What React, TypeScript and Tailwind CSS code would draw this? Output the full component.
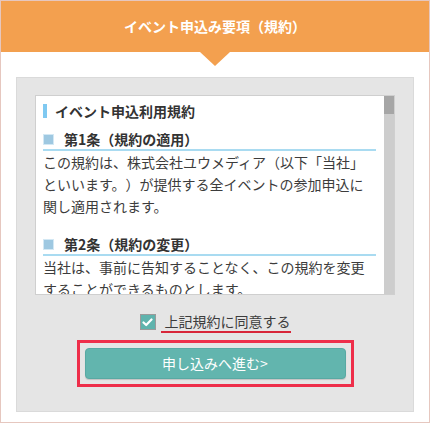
import React from 'react'

const font = { fontFamily: '"Noto Sans CJK JP", "Noto Sans", sans-serif' }

const Article = ({ title, body, first }: { title: string; body: string; first?: boolean }) => (
  <div className={first ? 'mt-2' : 'mt-[17px]'}>
    <h3 className="flex items-center gap-[10px] border-b-2 border-[#a9dbf1] text-[14px] font-bold leading-[20px] text-[#333]">
      <span className="h-[11px] w-[11px] border border-[#d3e8f4] bg-[#9ec8e1]" />
      {title}
    </h3>
    <p className="text-[14px] leading-[22px] text-[#3c3c3c]">{body}</p>
  </div>
)

export default function App() {
  return (
    <div
      style={font}
      className="h-[423px] w-[430px] border border-[#e6c7bf] bg-white [text-spacing-trim:space-all]"
    >
      <div className="flex h-[51px] items-center justify-center bg-[#f3a04f] text-[14px] font-bold text-white">
        イベント申込み要項（規約）
      </div>
      <div className="mx-auto h-0 w-0 border-x-[15px] border-t-[14px] border-x-transparent border-t-[#f3a04f]" />

      <div className="mx-[15px] mt-[11px] flex h-[335px] flex-col items-center border border-[#dadada] bg-[#e5e5e5] px-[18px] pt-[17px]">
        <div className="flex h-[200px] w-full border border-[#cfcfcf] bg-white">
          <div className="flex-1 overflow-hidden pl-[7px] pr-[8px] pt-[5px]">
            <h2 className="flex items-center gap-[8px] text-[14px] font-bold leading-[20px] text-[#333]">
              <span className="h-[14px] w-[4px] bg-[#7fc9f1]" />
              イベント申込利用規約
            </h2>
            <Article
              first
              title="第1条（規約の適用）"
              body="この規約は、株式会社ユウメディア（以下「当社」といいます。）が提供する全イベントの参加申込に関し適用されます。"
            />
            <Article
              title="第2条（規約の変更）"
              body="当社は、事前に告知することなく、この規約を変更することができるものとします。"
            />
          </div>
          <div className="w-[10px] bg-[#cdcdcd]">
            <div className="h-[18px] bg-[#a6a6a6]" />
          </div>
        </div>

        <label className="mt-[16px] flex h-[22px] items-center gap-[5px]">
          <span className="flex h-[16px] w-[16px] items-center justify-center border border-[#9a9a9a] bg-[#5fb3ad]">
            <svg width="11" height="9" viewBox="0 0 11 9" fill="none">
              <path d="M1.5 4.5 L4.2 7 L9.5 1.5" stroke="white" strokeWidth="2.2" strokeLinecap="round" strokeLinejoin="round" />
            </svg>
          </span>
          <span className="border-b-2 border-[#d8263a] pl-1 text-[14px] leading-[20px] text-[#3c3c3c]">
            上記規約に同意する
          </span>
        </label>

        <div className="mt-[7px] border-[3px] border-[#ee2e4a] p-[5px]">
          <button className="flex h-[31px] w-[261px] items-center justify-center rounded-[4px] border border-[#58a9a3] bg-[#62b5ae] text-[14px] text-white shadow-[0_1px_1px_rgba(0,0,0,0.15)]">
            申し込みへ進む&gt;
          </button>
        </div>
      </div>
    </div>
  )
}
